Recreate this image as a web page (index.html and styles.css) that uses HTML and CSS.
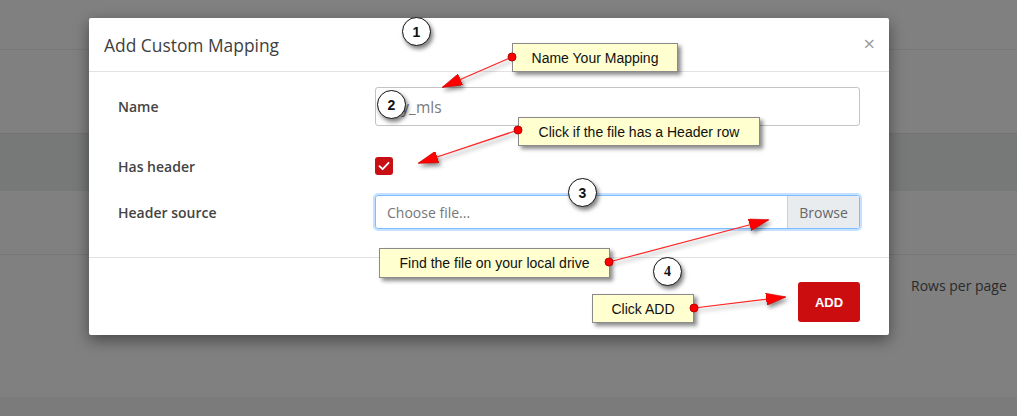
FILE: index.html
```html
<!DOCTYPE html>
<html>
<head>
<meta charset="utf-8">
<link rel="stylesheet" href="styles.css">
</head>
<body>
<div class="page">
  <div class="band band-top"></div>
  <div class="band band-a"></div>
  <div class="band band-b"></div>
  <div class="band band-c"></div>
  <div class="band band-d">
    <span class="rows-label">Rows per page</span>
  </div>
  <div class="band band-e"></div>
</div>

<div class="modal">
  <div class="modal-header">
    <h2 class="modal-title">Add Custom Mapping</h2>
    <span class="close">&times;</span>
  </div>
  <div class="modal-body">
    <div class="row row-name">
      <label class="label">Name</label>
      <div class="field"><div class="input">my_mls</div></div>
    </div>
    <div class="row row-check">
      <label class="label">Has header</label>
      <div class="field">
        <span class="checkbox">
          <svg width="18" height="18" viewBox="0 0 18 18"><path d="M4.5 9.2 L7.6 12.2 L13.6 5.8" fill="none" stroke="#fff" stroke-width="1.8" stroke-linecap="round" stroke-linejoin="round"/></svg>
        </span>
      </div>
    </div>
    <div class="row row-file">
      <label class="label">Header source</label>
      <div class="field">
        <div class="file-input">
          <span class="file-text">Choose file...</span>
          <span class="browse">Browse</span>
        </div>
      </div>
    </div>
  </div>
  <div class="modal-footer">
    <button class="btn-add">ADD</button>
  </div>
</div>

<svg class="arrows" width="1017" height="416" viewBox="0 0 1017 416">
  <defs>
    <marker id="head" markerUnits="userSpaceOnUse" viewBox="0 0 20 12" refX="19" refY="6" markerWidth="20" markerHeight="12" orient="auto">
      <path d="M0 0 L20 6 L0 12 Z" fill="#f00" stroke="#c00" stroke-width="0.6"/>
    </marker>
  </defs>
  <g class="arrow-group">
    <line x1="512" y1="57" x2="443" y2="87" stroke="#f22" stroke-width="1.2" marker-end="url(#head)"/>
    <line x1="518" y1="130" x2="419" y2="163" stroke="#f22" stroke-width="1.2" marker-end="url(#head)"/>
    <line x1="609" y1="262" x2="768" y2="220" stroke="#f22" stroke-width="1.2" marker-end="url(#head)"/>
    <line x1="694" y1="308" x2="785" y2="297" stroke="#f22" stroke-width="1.2" marker-end="url(#head)"/>
  </g>
</svg>

<div class="callout callout-a">Name Your Mapping</div>
<div class="callout callout-b">Click if the file has a Header row</div>
<div class="callout callout-c">Find the file on your local drive</div>
<div class="callout callout-d">Click ADD</div>

<svg class="dots" width="1017" height="416" viewBox="0 0 1017 416">
  <circle cx="512" cy="57" r="4" fill="#f00" stroke="#b00" stroke-width="1"/>
  <circle cx="518" cy="130" r="4" fill="#f00" stroke="#b00" stroke-width="1"/>
  <circle cx="609" cy="262" r="4" fill="#f00" stroke="#b00" stroke-width="1"/>
  <circle cx="694" cy="308" r="4" fill="#f00" stroke="#b00" stroke-width="1"/>
</svg>

<div class="step step-1">1</div>
<div class="step step-2">2</div>
<div class="step step-3">3</div>
<div class="step step-4">4</div>
</body>
</html>
```

FILE: styles.css
```css
html, body {
  margin: 0;
  padding: 0;
}
body {
  width: 1017px;
  height: 416px;
  overflow: hidden;
  position: relative;
  background: #808080;
  font-family: "Open Sans", "Liberation Sans", sans-serif;
}

.page {
  display: flex;
  flex-direction: column;
}
.band { background: #808080; }
.band-top { height: 49px; border-bottom: 1px solid #787878; }
.band-a { height: 83px; border-bottom: 1px solid #737373; }
.band-b { height: 57px; background: #777979; }
.band-c { height: 63px; border-bottom: 1px solid #767676; }
.band-d { height: 142px; position: relative; }
.band-e { height: 20px; background: #7b7b7b; }
.rows-label {
  position: absolute;
  left: 911px;
  top: 21px;
  font-size: 14px;
  color: #2a2a2a;
}

.modal {
  position: absolute;
  left: 89px;
  top: 18px;
  width: 800px;
  height: 317px;
  background: #fff;
  border-radius: 2px;
  box-shadow: 0 5px 15px rgba(0,0,0,0.45);
  display: flex;
  flex-direction: column;
}
.modal-header {
  height: 54px;
  box-sizing: border-box;
  border-bottom: 1px solid #e2e2e2;
  display: flex;
  align-items: center;
  justify-content: space-between;
  padding: 0 14px 0 15px;
  flex: none;
}
.modal-title {
  margin: 0;
  font-size: 17.4px;
  font-weight: 400;
  color: #3f3f3f;
  line-height: 1;
  padding-top: 2px;
}
.close {
  font-size: 20px;
  color: #999;
  line-height: 1;
  margin-top: -2px;
}

.modal-body {
  height: 186px;
  flex: none;
  border-bottom: 1px solid #e2e2e2;
  padding: 15px 29px 0 29px;
  box-sizing: border-box;
  display: flex;
  flex-direction: column;
}
.row {
  display: grid;
  grid-template-columns: 257px 1fr;
  align-items: center;
}
.row-name { height: 38px; }
.row-check { height: 38px; margin-top: 22px; }
.row-file { height: 34px; margin-top: 10px; }
.label {
  font-size: 14px;
  font-weight: 600;
  color: #444;
}
.input {
  height: 39px;
  box-sizing: border-box;
  border: 1px solid #c4c4c4;
  border-radius: 3px;
  padding: 0 11px;
  display: flex;
  align-items: center;
  font-size: 15.5px;
  color: #7a7a7a;
}
.checkbox {
  display: block;
  width: 18px;
  height: 18px;
  background: #c80f13;
  border-radius: 3px;
}
.checkbox svg { display: block; }
.file-input {
  height: 34px;
  box-sizing: border-box;
  border: 1px solid #80bdff;
  box-shadow: 0 0 0 2px rgba(128,189,255,0.45);
  border-radius: 3px;
  display: flex;
  align-items: stretch;
  overflow: hidden;
}
.file-text {
  flex: 1;
  display: flex;
  align-items: center;
  padding-left: 11px;
  font-size: 14px;
  color: #777;
}
.browse {
  width: 71px;
  background: #e9ecef;
  border-left: 1px solid #c9d3de;
  display: flex;
  align-items: center;
  justify-content: center;
  font-size: 14px;
  color: #666;
}

.modal-footer {
  flex: 1;
  display: flex;
  justify-content: flex-end;
  align-items: flex-start;
  padding: 24px 29px 0 0;
}
.btn-add {
  width: 62px;
  height: 40px;
  border: none;
  border-radius: 3px;
  background: #cc0d0f;
  color: #fff;
  font-family: "Liberation Sans", Arial, sans-serif;
  font-weight: 700;
  font-size: 13px;
  padding: 0;
}

.arrows, .dots {
  position: absolute;
  left: 0;
  top: 0;
  pointer-events: none;
}
.arrow-group {
  filter: drop-shadow(2px 3px 2px rgba(0,0,0,0.45));
}

.callout {
  position: absolute;
  box-sizing: border-box;
  background: #ffffd0;
  border: 1px solid #8a8a8a;
  box-shadow: 3px 3px 4px rgba(0,0,0,0.45);
  font-family: "Liberation Sans", Arial, sans-serif;
  font-size: 14px;
  color: #111;
  display: flex;
  align-items: center;
  justify-content: center;
  white-space: nowrap;
}
.callout-a { left: 512px; top: 43px; width: 166px; height: 29px; }
.callout-b { left: 518px; top: 117px; width: 242px; height: 29px; }
.callout-c { left: 379px; top: 248px; width: 231px; height: 30px; }
.callout-d { left: 592px; top: 294px; width: 102px; height: 29px; }

.step {
  position: absolute;
  width: 29px;
  height: 29px;
  box-sizing: border-box;
  border: 1.5px solid #111;
  border-radius: 50%;
  background: #fff;
  box-shadow: 2px 3px 4px rgba(0,0,0,0.5);
  display: flex;
  align-items: center;
  justify-content: center;
  font-family: "Liberation Sans", Arial, sans-serif;
  font-weight: 700;
  font-size: 14px;
  color: #111;
}
.step-1 { left: 402px; top: 17px; }
.step-2 { left: 377px; top: 90px; }
.step-3 { left: 568px; top: 178px; }
.step-4 { left: 653px; top: 257px; font-family: "Liberation Serif", serif; }
```
